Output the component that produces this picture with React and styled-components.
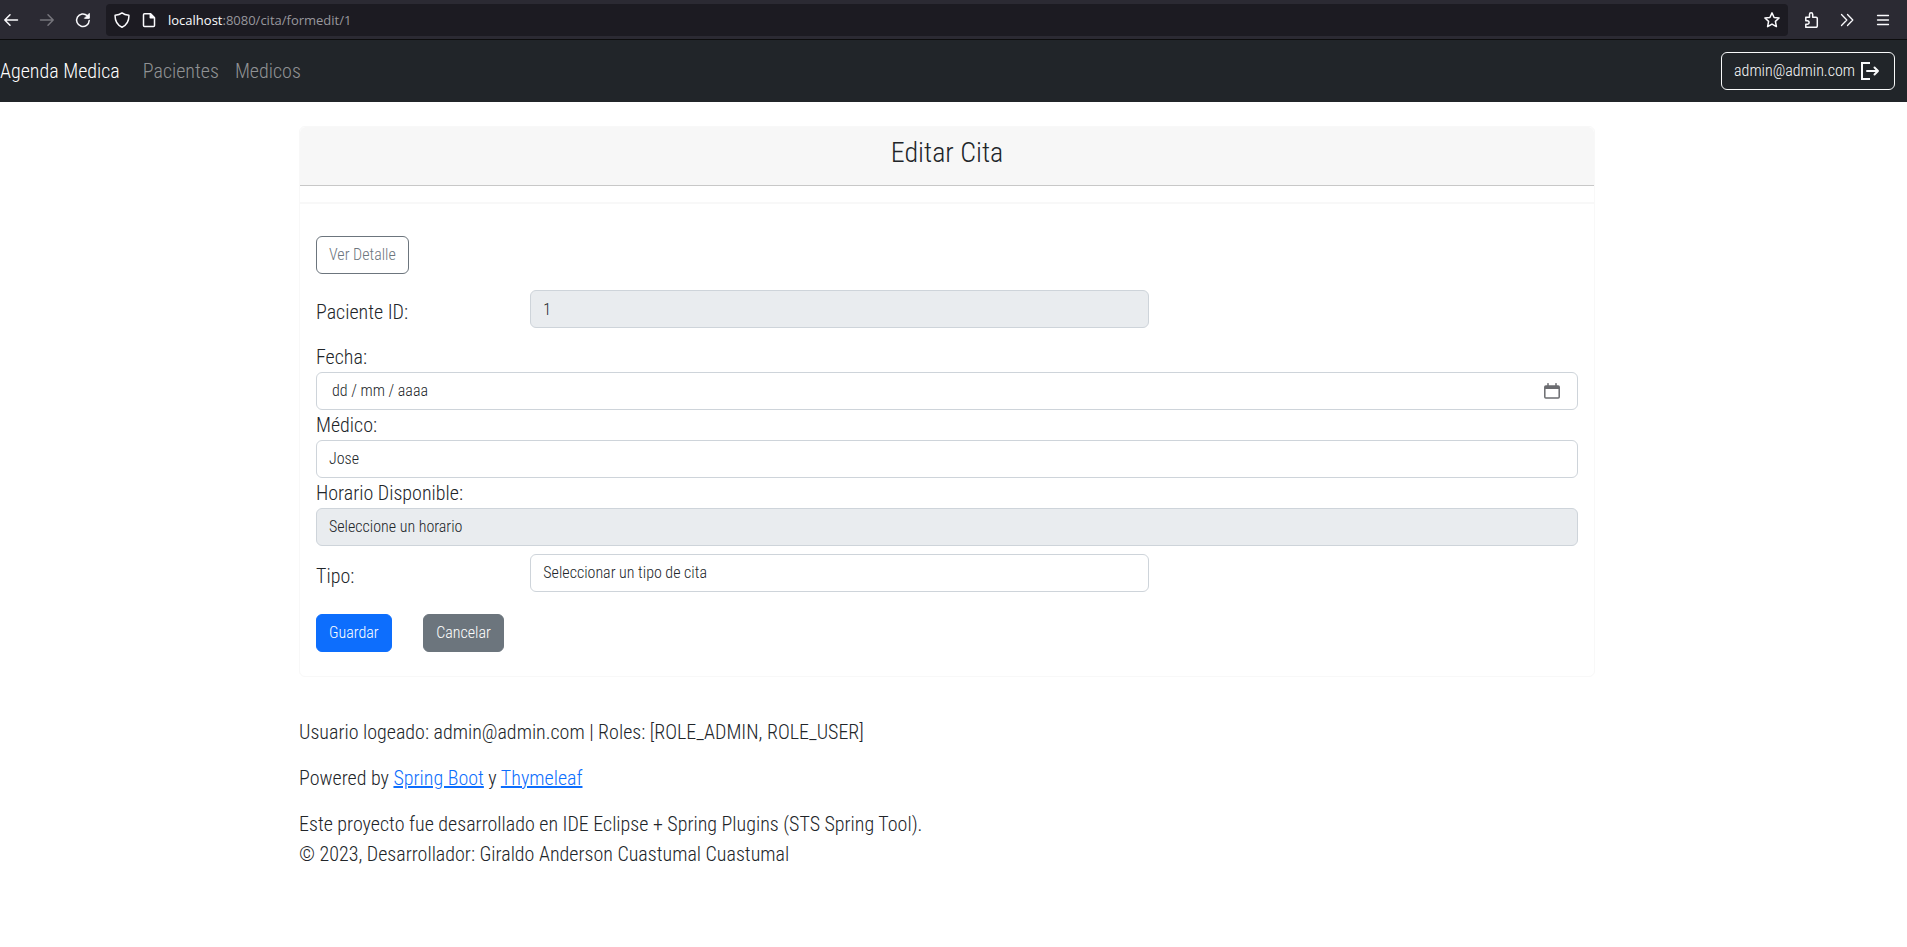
import React from "react";
import styled, { createGlobalStyle } from "styled-components";

const GlobalStyle = createGlobalStyle`
  *, *::before, *::after { box-sizing: border-box; }
  body {
    margin: 0;
    background: #fff;
    color: #212529;
    font-family: "Roboto Condensed", "Liberation Sans Narrow", Roboto, sans-serif;
    font-size: 20px;
    font-weight: 300;
    line-height: 30px;
  }
  button, input, select { font: inherit; }
`;

const Toolbar = styled.div`
  display: flex;
  align-items: center;
  gap: 15px;
  height: 40px;
  padding: 0 16px 0 3px;
  background: #2b2a33;
  border-bottom: 1px solid #0c0c0d;
`;

const ToolGroup = styled.div`
  display: flex;
  gap: 20px;
`;

const IconButton = styled.button`
  display: flex;
  width: 16px;
  height: 16px;
  padding: 0;
  border: 0;
  background: none;
  color: ${(p) => (p.$dim ? "#76757c" : "#fbfbfe")};
`;

const AddressBar = styled.div`
  flex: 1;
  display: flex;
  align-items: center;
  gap: 11px;
  height: 32px;
  padding: 0 8px;
  border-radius: 4px;
  background: #1c1b22;
`;

const Address = styled.div`
  flex: 1;
  color: #98979d;
  font-family: "Open Sans", sans-serif;
  font-size: 13px;
  font-weight: 400;
  line-height: 20px;
`;

const Host = styled.span`
  color: #fbfbfe;
`;

const Navbar = styled.nav`
  display: flex;
  align-items: center;
  height: 62px;
  padding-right: 12px;
  background: #212529;
`;

const Brand = styled.a`
  margin-right: 23px;
  color: #fff;
  text-decoration: none;
`;

const NavLinks = styled.div`
  flex: 1;
  display: flex;
  gap: 16px;
`;

const NavLink = styled.a`
  color: #909294;
  text-decoration: none;
`;

const buttonLooks = {
  primary: ["#0d6efd", "#0d6efd", "#fff"],
  secondary: ["#6c757d", "#6c757d", "#fff"],
  outline: ["transparent", "#6c757d", "#6c757d"],
  light: ["transparent", "#f8f9fa", "#f8f9fa"],
};

const Button = styled.button`
  display: inline-flex;
  align-items: center;
  justify-self: start;
  gap: 3px;
  height: 38px;
  padding: 0 12px;
  border: 1px solid ${(p) => buttonLooks[p.$look][1]};
  border-radius: 6px;
  background: ${(p) => buttonLooks[p.$look][0]};
  color: ${(p) => buttonLooks[p.$look][2]};
  font-size: 16px;
  line-height: 24px;
  white-space: nowrap;
`;

const Page = styled.div`
  max-width: 1309px;
  margin: 0 auto;
  padding: 24px 13px 48px 0;
`;

const Card = styled.main`
  border: 1px solid #f8f8f8;
  border-radius: 6px;
`;

const CardHeader = styled.header`
  padding: 8px 16px 14px;
  border-bottom: 1px solid #c8c8c8;
  border-radius: 6px 6px 0 0;
  background: #f7f7f7;
  text-align: center;
`;

const Title = styled.h1`
  margin: 0;
  font-size: 28px;
  font-weight: 300;
  line-height: 36px;
`;

const CardBody = styled.form`
  margin-top: 16px;
  padding: 32px 16px 24px;
  border-top: 2px solid #f8f8f8;
`;

const Row = styled.div`
  display: grid;
  grid-template-columns: repeat(12, minmax(0, 1fr));
  column-gap: 24px;
  margin-top: ${(p) => p.$top}px;
`;

const SideLabel = styled.label`
  grid-column: span 2;
  padding: 7px 0;
`;

const Label = styled.label`
  display: block;
`;

const DateField = styled.div`
  margin-top: 8px;
`;

const Control = styled.input`
  display: block;
  width: 100%;
  height: 38px;
  grid-column: span 6;
  padding: 6px 12px;
  border: 1px solid #ced4da;
  border-radius: 6px;
  outline: 0;
  appearance: none;
  background: ${(p) => (p.disabled || p.readOnly ? "#e9ecef" : "#fff")};
  color: #212529;
  opacity: 1;
  font-size: 16px;
  line-height: 24px;
`;

const DateBox = styled.div`
  display: flex;
  align-items: center;
  height: 38px;
  padding: 0 17px 0 15px;
  border: 1px solid #ced4da;
  border-radius: 6px;
`;

const DateInput = styled.input`
  flex: 1;
  padding: 0;
  border: 0;
  outline: 0;
  background: none;
  color: #212529;
  font-size: 16px;
  line-height: 24px;
  &::placeholder { color: #212529; opacity: 1; }
`;

const CalendarButton = styled(IconButton)`
  color: #6b6c70;
`;

const Footer = styled.footer`
  margin-top: 40px;
`;

const Paragraph = styled.p`
  margin: 0 0 16px;
`;

const Link = styled.a`
  color: #0d6efd;
`;

const Svg = ({ size = 16, width = 1.5, children }) => (
  <svg width={size} height={size} viewBox={`0 0 ${size} ${size}`} fill="none" stroke="currentColor"
    strokeWidth={width} strokeLinecap="round" strokeLinejoin="round" aria-hidden="true">
    {children}
  </svg>
);

export default function App() {
  return (
    <>
      <GlobalStyle />
      <Toolbar>
        <ToolGroup>
          <IconButton aria-label="Atrás"><Svg><path d="M14.5 8H1.8M7 2.8 1.8 8 7 13.2" /></Svg></IconButton>
          <IconButton aria-label="Adelante" $dim><Svg><path d="M1.5 8h12.7M9 2.8 14.2 8 9 13.2" /></Svg></IconButton>
          <IconButton aria-label="Recargar">
            <Svg>
              <path d="M14.2 8.5A6.3 6.3 0 1 1 12.2 3.6" />
              <path d="M14.3 1.8v4.5H9.8z" fill="currentColor" strokeWidth="1" />
            </Svg>
          </IconButton>
        </ToolGroup>
        <AddressBar>
          <Svg><path d="M8 .9C6.2 2.3 4 3 1.1 3.3c-.2 5.6 1.9 9.6 6.9 11.9 5-2.3 7.1-6.3 6.9-11.9C12 3 9.8 2.3 8 .9z" stroke="#fbfbfe" /></Svg>
          <Svg>
            <path d="M3.5 1.7h6l4 4v7.8q0 1-1 1h-9q-1 0-1-1V2.7q0-1 1-1z" stroke="#fbfbfe" />
            <path d="M9.3 1.7v4h4z" fill="#fbfbfe" stroke="#fbfbfe" />
          </Svg>
          <Address><Host>localhost</Host>:8080/cita/formedit/1</Address>
          <IconButton aria-label="Añadir a marcadores">
            <Svg><path d="m8 .9 2.1 4.6 5 .5-3.7 3.4 1 5.2L8 12.1l-4.4 2.5 1-5.2L.9 6l5-.5z" /></Svg>
          </IconButton>
        </AddressBar>
        <ToolGroup>
          <IconButton aria-label="Extensiones">
            <Svg><path d="M2.8 5.2h3.7V2.4a1.6 1.6 0 0 1 3.2 0v2.8h3.4q1.2 0 1.2 1.2v7.7q0 1.2-1.2 1.2H2.8v-3h1.5a1.6 1.6 0 0 0 0-3.6H2.8z" /></Svg>
          </IconButton>
          <IconButton aria-label="Más herramientas"><Svg width={1.3}><path d="m2.5 2.5 5.3 5.5-5.3 5.5M8.5 2.5 13.8 8l-5.3 5.5" /></Svg></IconButton>
          <IconButton aria-label="Menú"><Svg width={1.3}><path d="M2.5 3.5h11M2.5 8h11M2.5 12.5h11" /></Svg></IconButton>
        </ToolGroup>
      </Toolbar>

      <Navbar>
        <Brand href="#inicio">Agenda Medica</Brand>
        <NavLinks>
          <NavLink href="#pacientes">Pacientes</NavLink>
          <NavLink href="#medicos">Medicos</NavLink>
        </NavLinks>
        <Button $look="light" type="button">
          admin@admin.com
          <Svg size={24} width={2}>
            <path d="M12 4H4v16h8" strokeLinecap="butt" strokeLinejoin="miter" />
            <path d="M9 12h11M16.5 8.5 20 12l-3.5 3.5" />
          </Svg>
        </Button>
      </Navbar>

      <Page>
        <Card>
          <CardHeader><Title>Editar Cita</Title></CardHeader>
          <CardBody onSubmit={(e) => e.preventDefault()}>
            <Button $look="outline" type="button">Ver Detalle</Button>
            <Row $top={16}>
              <SideLabel htmlFor="paciente">Paciente ID:</SideLabel>
              <Control id="paciente" value="1" readOnly />
            </Row>
            <DateField>
              <Label htmlFor="fecha">Fecha:</Label>
              <DateBox>
                <DateInput id="fecha" placeholder="dd / mm / aaaa" />
                <CalendarButton type="button" aria-label="Abrir calendario">
                  <Svg>
                    <path d="M1.8 3h12.4q1 0 1 1v10q0 1-1 1H1.8q-1 0-1-1V4q0-1 1-1zM4 .7V3M12 .7V3" />
                    <path d="M1 3h14v3H1z" fill="currentColor" stroke="none" />
                  </Svg>
                </CalendarButton>
              </DateBox>
            </DateField>
            <Label htmlFor="medico">Médico:</Label>
            <Control as="select" id="medico"><option>Jose</option></Control>
            <Label htmlFor="horario">Horario Disponible:</Label>
            <Control as="select" id="horario" disabled><option>Seleccione un horario</option></Control>
            <Row $top={8}>
              <SideLabel htmlFor="tipo">Tipo:</SideLabel>
              <Control as="select" id="tipo"><option>Seleccionar un tipo de cita</option></Control>
            </Row>
            <Row $top={16}>
              <Button $look="primary" type="submit">Guardar</Button>
              <Button $look="secondary" type="button">Cancelar</Button>
            </Row>
          </CardBody>
        </Card>

        <Footer>
          <Paragraph>Usuario logeado: admin@admin.com | Roles: [ROLE_ADMIN, ROLE_USER]</Paragraph>
          <Paragraph>
            Powered by <Link href="#spring-boot">Spring Boot</Link> y <Link href="#thymeleaf">Thymeleaf</Link>
          </Paragraph>
          <Paragraph>
            Este proyecto fue desarrollado en IDE Eclipse + Spring Plugins (STS Spring Tool).
            <br />© 2023, Desarrollador: Giraldo Anderson Cuastumal Cuastumal
          </Paragraph>
        </Footer>
      </Page>
    </>
  );
}
